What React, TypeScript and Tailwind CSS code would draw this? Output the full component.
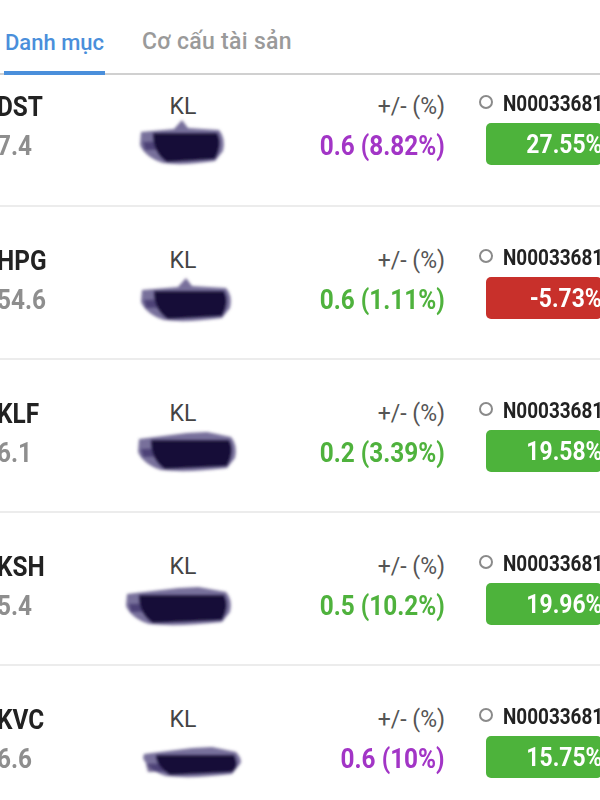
import React from 'react';

type Row = {
  sym: string;
  price: string;
  chg: string;
  chgColor: string;
  acct: string;
  pct: string;
  up: boolean;
  blob: [number, number, number, number];
  spike: boolean;
};

const rows: Row[] = [
  { sym: 'DST', price: '7.4', chg: '0.6 (8.82%)', chgColor: 'text-[#a235c6]', acct: 'N00033681', pct: '27.55%', up: true, blob: [14, 100, 3, 48], spike: true },
  { sym: 'HPG', price: '54.6', chg: '0.6 (1.11%)', chgColor: 'text-[#4fb23d]', acct: 'N00033681', pct: '-5.73%', up: false, blob: [15, 107, 7, 51], spike: true },
  { sym: 'KLF', price: '6.1', chg: '0.2 (3.39%)', chgColor: 'text-[#4fb23d]', acct: 'N00033681', pct: '19.58%', up: true, blob: [12, 112, 3, 48], spike: false },
  { sym: 'KSH', price: '5.4', chg: '0.5 (10.2%)', chgColor: 'text-[#4fb23d]', acct: 'N00033681', pct: '19.96%', up: true, blob: [0, 107, 5, 49], spike: false },
  { sym: 'KVC', price: '6.6', chg: '0.6 (10%)', chgColor: 'text-[#a235c6]', acct: 'N00033681', pct: '15.75%', up: true, blob: [17, 117, 12, 48], spike: false },
];

// hand-drawn redaction mark over the volume figure
function Scribble({ box, id, spike }: { box: [number, number, number, number]; id: number; spike: boolean }) {
  const [x0, x1, y0, y1] = box;
  const mx = (x0 + x1) / 2;
  const top = spike ? `L${mx - 8} ${y0 + 9} L${mx} ${y0} L${mx + 6} ${y0 + 8}` : `L${mx} ${y0 + 6} L${mx + 20} ${y0 + 5}`;
  const outer = `M${x0 + 2} ${y0 + 12} ${top} L${x1 - 6} ${y0 + 10} Q${x1 + 1} ${y0 + 18} ${x1 - 2} ${y1 - 14} L${x1 - 10} ${y1 - 4} Q${mx} ${y1 + 1} ${x0 + 24} ${y1 - 2} Q${x0 + 6} ${y1 - 8} ${x0 + 1} ${y1 - 20} Z`;
  const inner = `M${x0 + 14} ${y0 + 13} L${x1 - 8} ${y0 + 13} Q${x1 - 2} ${y0 + 24} ${x1 - 10} ${y1 - 6} L${x0 + 28} ${y1 - 3} Q${x0 + 14} ${y1 - 12} ${x0 + 14} ${y0 + 13} Z`;
  const streak = `M${x0 + 4} ${y0 + 22} L${x1 - 20} ${y0 + 20} L${x1 - 22} ${y0 + 28} L${x0 + 6} ${y0 + 30} Z`;
  return (
    <svg width="116" height="52" viewBox="0 0 116 52" className="-mt-[4px] overflow-visible">
      <defs>
        <filter id={`blur${id}`} x="-10%" y="-20%" width="120%" height="140%">
          <feGaussianBlur stdDeviation="1.4" />
        </filter>
      </defs>
      <g filter={`url(#blur${id})`}>
        <path d={outer} fill="#564c82" opacity="0.8" />
        <path d={streak} fill="#3a2f68" opacity="0.7" />
        <path d={inner} fill="#140a38" />
      </g>
    </svg>
  );
}

function StockRow({ r, i, first }: { r: Row; i: number; first: boolean }) {
  const cond = 'inline-block scale-x-[0.87] font-bold';
  return (
    <div className={`flex border-b-2 border-[#ececec] ${first ? 'h-[132px] pt-[13px]' : 'h-[153px] pt-[35px]'}`}>
      <div className="w-[128px] shrink-0 pt-[4px] flex flex-col gap-[9px] -ml-[3px]">
        <span className={`${cond} origin-left text-[28px] leading-[30px] text-[#222]`}>{r.sym}</span>
        <span className={`${cond} origin-left text-[28px] leading-[30px] text-[#8e8e8e]`}>{r.price}</span>
      </div>
      <div className="w-[116px] shrink-0 pt-[5px] flex flex-col items-center">
        <span className="text-[23px] leading-[28px] text-[#444]">KL</span>
        <Scribble box={r.blob} id={i} spike={r.spike} />
      </div>
      <div className="w-[204px] shrink-0 pt-[4px] flex flex-col items-end gap-[9px]">
        <span className="text-[23px] leading-[30px] text-[#555]">+/- (%)</span>
        <span className={`${cond} origin-right text-[28px] leading-[30px] ${r.chgColor}`}>{r.chg}</span>
      </div>
      <div className="ml-[34px] w-[160px] shrink-0 flex flex-col">
        <div className="flex items-center h-[30px]">
          <span className="w-[14px] h-[14px] rounded-full border-2 border-[#8a8a8a] -mt-[2px]" />
          <span className="inline-block scale-x-[0.86] font-bold origin-left ml-[10px] text-[22px] text-[#222]">{r.acct}</span>
        </div>
        <div
          className={`mt-[5px] ml-[7px] w-[116px] h-[42px] rounded-[5px] flex items-center justify-end pr-0 ${
            r.up ? 'bg-[#4db33b]' : 'bg-[#c8302b]'
          }`}
        >
          <span className="inline-block scale-x-[0.88] font-bold origin-right text-[26px] leading-[30px] text-white">{r.pct}</span>
        </div>
      </div>
    </div>
  );
}

export default function App() {
  return (
    <div className="w-[600px] h-[800px] overflow-hidden bg-white font-['Roboto',sans-serif]">
      {/* Tabs */}
      <div className="relative flex items-end h-[75px] border-b-2 border-[#d0d0d0] px-[4px] gap-[37px]">
        <div className="relative pb-[14px]">
          <span className="text-[22px] font-medium text-[#4a8fdb] px-[1px]">Danh mục</span>
          <div className="absolute left-0 right-0 -bottom-[2px] h-[4px] bg-[#4a8fdb]" />
        </div>
        <div className="pb-[14px]">
          <span className="text-[23px] font-medium text-[#9a9a9a] tracking-[0.3px]">Cơ cấu tài sản</span>
        </div>
      </div>

      {/* Portfolio list */}
      <div className="w-[640px]">
        {rows.map((r, i) => (
          <StockRow key={r.sym} r={r} i={i} first={i === 0} />
        ))}
      </div>
    </div>
  );
}
